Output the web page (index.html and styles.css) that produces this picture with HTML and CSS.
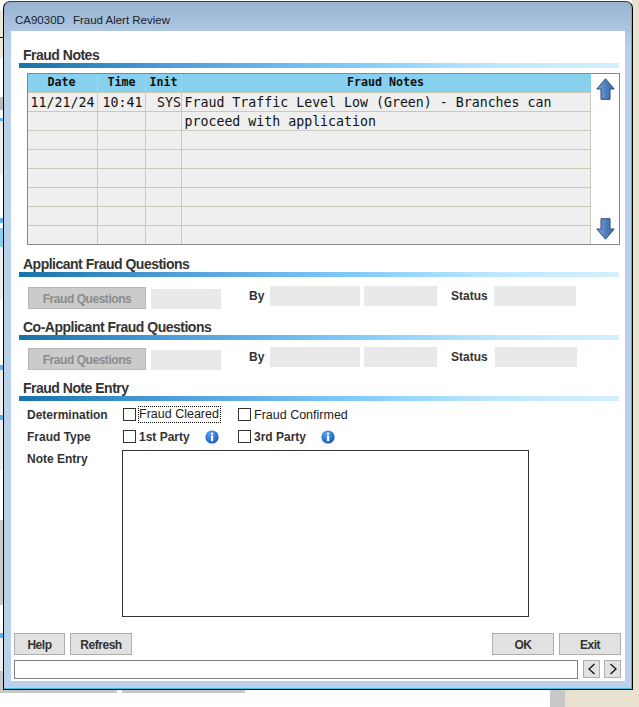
FILE: index.html
```html
<!DOCTYPE html>
<html lang="en">
<head>
<meta charset="utf-8">
<title>CA9030D Fraud Alert Review</title>
<link rel="stylesheet" href="styles.css">
</head>
<body>
<div class="desktop">
  <div class="bg-left"></div>
  <div class="bg-right"></div>
  <div class="bg-bottom"></div>
  <div class="stub stub-a"></div>
  <div class="stub stub-b"></div>
  <div class="stub stub-c"></div>

  <div class="window">
    <div class="titlebar"><span class="title-code">CA9030D</span><span>Fraud Alert Review</span></div>
    <div class="main">
      <h2 class="heading heading-first">Fraud Notes</h2>
      <div class="bar"></div>
      <div class="notes">
        <table class="grid">
          <colgroup><col class="c1"><col class="c2"><col class="c3"><col class="c4"></colgroup>
          <thead><tr><th class="th-shift">Date</th><th>Time</th><th>Init</th><th class="th-shift">Fraud Notes</th></tr></thead>
          <tbody>
            <tr><td class="ctr">11/21/24</td><td class="ctr ctr-time">10:41</td><td class="rgt">SYS</td><td>Fraud Traffic Level Low (Green) - Branches can</td></tr>
            <tr><td></td><td></td><td></td><td>proceed with application</td></tr>
            <tr><td></td><td></td><td></td><td></td></tr>
            <tr><td></td><td></td><td></td><td></td></tr>
            <tr><td></td><td></td><td></td><td></td></tr>
            <tr><td></td><td></td><td></td><td></td></tr>
            <tr><td></td><td></td><td></td><td></td></tr>
            <tr><td></td><td></td><td></td><td></td></tr>
          </tbody>
        </table>
        <div class="scroller">
          <svg class="arrow" viewBox="0 0 19 22" width="19" height="22"><defs><linearGradient id="au" x1="0" y1="0" x2="1" y2="0"><stop offset="0" stop-color="#7fa6da"/><stop offset="0.55" stop-color="#4f7dbc"/><stop offset="1" stop-color="#3d69a8"/></linearGradient></defs><path d="M9.5 .8 18.2 11H14V21.3H5V11H.8Z" fill="url(#au)" stroke="#2b4a82" stroke-width="1"/></svg>
          <svg class="arrow" viewBox="0 0 19 22" width="19" height="22"><defs><linearGradient id="ad" x1="0" y1="0" x2="1" y2="0"><stop offset="0" stop-color="#7fa6da"/><stop offset="0.55" stop-color="#4f7dbc"/><stop offset="1" stop-color="#3d69a8"/></linearGradient></defs><path d="M9.5 21.2 18.2 11H14V.7H5V11H.8Z" fill="url(#ad)" stroke="#2b4a82" stroke-width="1"/></svg>
        </div>
      </div>

      <h2 class="heading heading-next">Applicant Fraud Questions</h2>
      <div class="bar"></div>
      <div class="qrow qrow-a">
        <button class="qbtn" type="button">Fraud Questions</button>
        <div class="field f-sm"></div>
        <span class="lbl lbl-by">By</span>
        <div class="field f-by"></div>
        <div class="field f-by2"></div>
        <span class="lbl lbl-status">Status</span>
        <div class="field f-status"></div>
      </div>

      <h2 class="heading heading-next2">Co-Applicant Fraud Questions</h2>
      <div class="bar"></div>
      <div class="qrow qrow-b">
        <button class="qbtn" type="button">Fraud Questions</button>
        <div class="field f-sm"></div>
        <span class="lbl lbl-by">By</span>
        <div class="field f-by"></div>
        <div class="field f-by2"></div>
        <span class="lbl lbl-status lbl-status-wide">Status</span>
        <div class="field f-status"></div>
      </div>

      <h2 class="heading heading-next3">Fraud Note Entry</h2>
      <div class="bar"></div>
      <div class="frow frow-a">
        <span class="lbl flabel">Determination</span>
        <span class="cb"></span><span class="lbl opt opt-focus">Fraud Cleared</span>
        <span class="cb cb-2"></span><span class="lbl opt">Fraud Confirmed</span>
      </div>
      <div class="frow frow-b">
        <span class="lbl flabel">Fraud Type</span>
        <span class="cb"></span><span class="lbl opt opt-party">1st Party</span>
        <svg class="info" viewBox="0 0 14 14" width="14" height="14"><defs><radialGradient id="i1" cx="0.4" cy="0.3" r="0.8"><stop offset="0" stop-color="#5ba6f5"/><stop offset="1" stop-color="#0f4fb5"/></radialGradient></defs><circle cx="7" cy="7" r="6.6" fill="url(#i1)"/><rect x="6" y="2.6" width="2.2" height="2" fill="#fff"/><rect x="6" y="5.6" width="2.2" height="5.6" fill="#fff"/></svg>
        <span class="cb cb-3"></span><span class="lbl opt opt-party opt-party-2">3rd Party</span>
        <svg class="info" viewBox="0 0 14 14" width="14" height="14"><defs><radialGradient id="i2" cx="0.4" cy="0.3" r="0.8"><stop offset="0" stop-color="#5ba6f5"/><stop offset="1" stop-color="#0f4fb5"/></radialGradient></defs><circle cx="7" cy="7" r="6.6" fill="url(#i2)"/><rect x="6" y="2.6" width="2.2" height="2" fill="#fff"/><rect x="6" y="5.6" width="2.2" height="5.6" fill="#fff"/></svg>
      </div>
      <div class="frow frow-c">
        <span class="lbl flabel flabel-top">Note Entry</span>
        <div class="note"></div>
      </div>

      <div class="actions">
        <button class="btn b-help" type="button">Help</button>
        <button class="btn b-std" type="button">Refresh</button>
        <span class="spacer"></span>
        <button class="btn b-std" type="button">OK</button>
        <button class="btn b-std" type="button">Exit</button>
      </div>
      <div class="status">
        <div class="status-box"></div>
        <button class="nav" type="button"><svg viewBox="0 0 10 12" width="10" height="12"><path d="M7.5 1 2 6l5.500 5" fill="none" stroke="#111" stroke-width="1.300"/></svg></button>
        <button class="nav" type="button"><svg viewBox="0 0 10 12" width="10" height="12"><path d="M2.500 1 8 6l-5.500 5" fill="none" stroke="#111" stroke-width="1.300"/></svg></button>
      </div>
    </div>
  </div>
</div>
</body>
</html>
```

FILE: styles.css
```css
* { box-sizing: border-box; }
html, body { margin: 0; padding: 0; background: #fff; }
.desktop { position: relative; width: 639px; height: 707px; overflow: hidden; background: #fff; font-family: "Liberation Sans", Arial, sans-serif; }

.bg-left { position: absolute; left: 0; top: 0; width: 3px; height: 692px;
  background: linear-gradient(to bottom,
    #fff 0 10px, #efe8d8 10px 37px, #111 37px 38px, #efe8d8 38px 58px, #fff 58px 97px,
    #bcbcbc 97px 110px, #fff 110px 118px, #5cb4ee 118px 121px, #efe8d8 121px 126px, #eee 126px 175px,
    #fff 175px 218px, #5cb4ee 218px 223px, #fff 223px 228px, #87d0ee 228px 247px, #efefef 247px 300px,
    #fff 300px 365px, #5cb4ee 365px 370px, #eee 370px 415px, #5cb4ee 415px 420px, #eee 420px 470px,
    #fff 470px 520px, #ccc 520px 605px, #fff 605px 633px, #5cb4ee 633px 638px, #eee 638px 671px, #c8c8c8 671px 692px); }
.bg-right { position: absolute; right: 0; top: 0; width: 7px; height: 707px; background: #e9e2d0; }
.bg-bottom { position: absolute; left: 565px; right: 0; top: 690px; height: 17px; background: #e9e2d0; }
.stub { position: absolute; top: 690px; background: #c8c8c8; }
.stub-a { left: 0; width: 117px; height: 3px; }
.stub-b { left: 122px; width: 123px; height: 3px; }
.stub-c { left: 550px; width: 15px; height: 17px; }

.window { position: absolute; left: 3px; top: 1px; width: 630px; height: 689px; display: flex; flex-direction: column;
  border: 1px solid #000; border-top-color: #3c3c3c; border-radius: 7px 7px 0 0; padding: 0 7px 8px 7px;
  background: linear-gradient(to bottom, #98b3d1 0, #b9d1ea 45px);
  box-shadow: inset -1px -1px 0 #39c4e6; }

.titlebar { height: 29px; margin: 0 -7px; padding: 10px 0 0 11px; font-family: "Liberation Sans", Arial, sans-serif; font-size: 11.500px; line-height: 16px; color: #18212c; }
.title-code { margin-right: 8px; }

.main { width: 614px; height: 650px; background: #fff; display: flex; flex-direction: column; padding-top: 16px; }

.heading { margin: 0 0 0 12px; height: 16px; font-size: 14px; letter-spacing: -0.5px; line-height: 16px; font-weight: bold; color: #333; white-space: nowrap; }
.heading-first { margin-top: 0; }
.heading-next { margin-top: 11px; }
.heading-next2 { margin-top: 10px; }
.heading-next3 { margin-top: 10px; }
.bar { margin-left: 8px; width: 600px; height: 5px; flex: none; background: linear-gradient(to right, #1673a9 0, #4d9ddb 25%, #7fcaf9 55%, #bfe8fd 80%, #d3f0fd 100%); }

.notes { display: flex; margin: 5px 0 0 16px; width: 593px; height: 172px; border: 1px solid #85858d; flex: none; }
.grid { width: 563px; table-layout: fixed; border-collapse: separate; border-spacing: 0; font-family: "DejaVu Sans Mono", monospace; color: #111; }
.c1 { width: 70px; } .c2 { width: 48px; } .c3 { width: 36px; } .c4 { width: 409px; }
.grid th { height: 19px; padding: 0; background: #87d0ee; font-size: 11.670px; line-height: 16px; font-weight: bold; vertical-align: top; border-right: 1px solid #c9c9b8; border-bottom: 1px solid #c9c9b8; }
.grid th.th-shift { padding-right: 2px; }
.grid th:last-child { border-right: 0; }
.grid td { height: 19px; padding: 2px 0 0 2.500px; background: #efefef; font-size: 13.250px; line-height: 16px; border-right: 1px solid #c9c9b8; border-bottom: 1px solid #c9c9b8; white-space: nowrap; }
.grid tr:last-child td { height: 18px; border-bottom: 0; }
.grid td.ctr { padding-left: 0; text-align: center; }
.grid td.ctr-time { padding-left: 2px; }
.grid td.rgt { padding-left: 0; text-align: right; }
.scroller { flex: 1; display: flex; flex-direction: column; justify-content: space-between; align-items: center; padding: 4px 0 4px 0; }
.arrow { display: block; }

.lbl { font-size: 12px; line-height: 16px; font-weight: bold; color: #333; white-space: nowrap; }

.qrow { display: flex; align-items: flex-start; margin-left: 17px; flex: none; height: 23px; }
.qrow-a { margin-top: 9px; }
.qrow-b { margin-top: 7px; }
.qbtn { width: 118px; height: 22px; margin: 1px 0 0 0; padding: 1px 0 0 0; background: #cbcbcb; border: 1px solid #b7b7b7; font: bold 12px/18px "Liberation Sans", Arial, sans-serif; letter-spacing: -0.45px; color: #8b8b8b; }
.field { height: 20px; background: #e9e9e9; flex: none; }
.f-sm { width: 70px; margin: 3px 0 0 5px; }
.lbl-by { width: 21px; margin: 2px 0 0 28px; }
.f-by { width: 90px; }
.f-by2 { width: 73px; margin-left: 4px; }
.lbl-status { width: 43px; margin: 2px 0 0 14px; }
.lbl-status-wide { width: 44px; }
.f-status { width: 82px; }

.frow { display: flex; align-items: center; margin-left: 16px; flex: none; }
.frow-a { margin-top: 5px; height: 17px; }
.frow-b { margin-top: 5px; height: 17px; }
.frow-c { align-items: flex-start; height: 168px; margin-top: 5px; }
.flabel { width: 96px; }
.flabel-top { width: 95px; padding-top: 1px; }
.cb { width: 13px; height: 13px; flex: none; background: #fff; border: 1px solid #333; }
.cb-2 { margin-left: 17px; }
.cb-3 { margin-left: 19px; }
.opt { margin-left: 2px; padding-left: 1px; font-size: 12.500px; font-weight: normal; color: #222; }
.opt-party { font-size: 12px; font-weight: bold; color: #333; width: 67px; }
.opt-party-2 { width: 68px; }
.opt-focus { width: 83px; height: 17px; line-height: 17px; outline: 1px dotted #111; outline-offset: -1px; }
.info { flex: none; display: block; margin-left: 0; }
.note { width: 407px; height: 167px; border: 1px solid #333; background: #fff; }

.actions { display: flex; gap: 5px; margin: 15px 4px 0 3px; flex: none; }
.spacer { flex: 1; }
.btn { height: 22px; padding: 1px 0 0 0; background: #e1e1e1; border: 1px solid #aeaeae; font: bold 12px/18px "Liberation Sans", Arial, sans-serif; letter-spacing: -0.45px; color: #333; }
.b-help { width: 51px; }
.b-std { width: 62px; }

.status { display: flex; align-items: flex-start; margin: 5px 4px 0 3px; flex: none; }
.status-box { width: 564px; height: 19px; border: 1px solid #808080; background: #fff; }
.nav { width: 17px; height: 18px; margin-left: 4px; padding: 0; background: #e1e1e1; border: 1px solid #aeaeae; display: flex; align-items: center; justify-content: center; }
.nav:first-of-type { margin-left: 5px; }
```
